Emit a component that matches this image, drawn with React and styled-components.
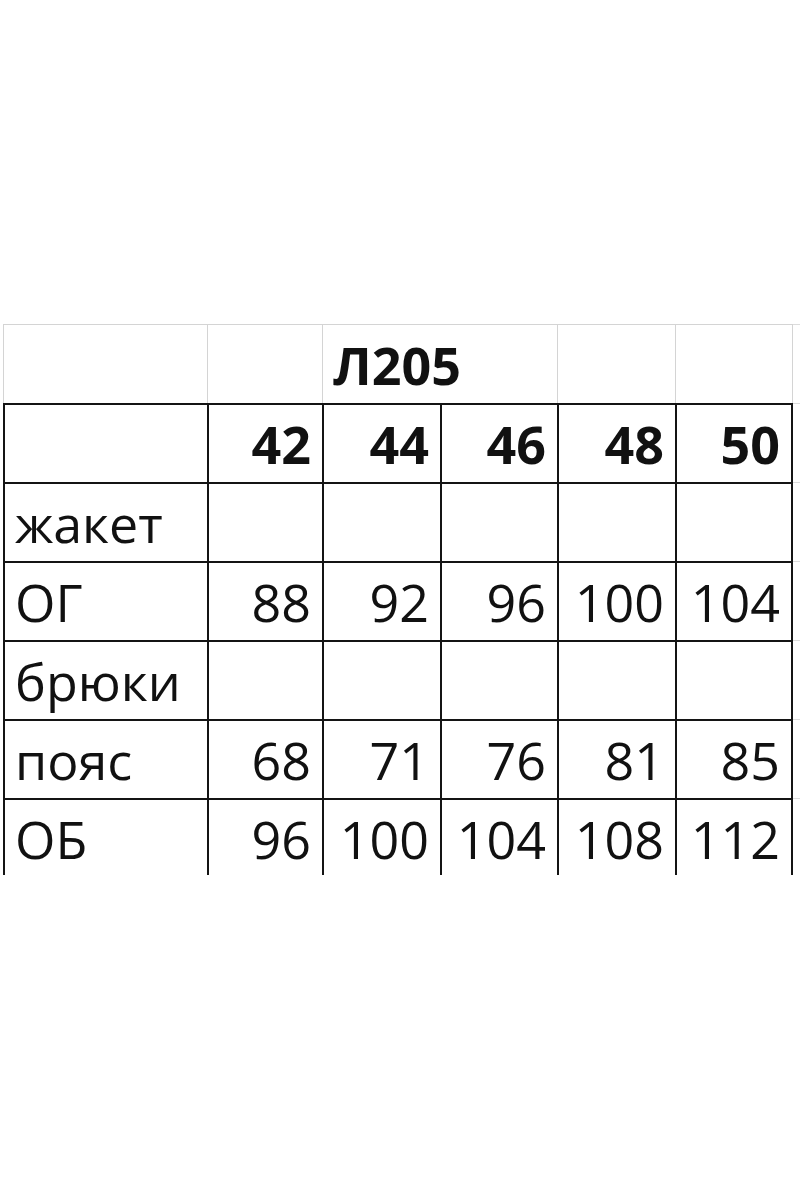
import React from "react";
import styled, { createGlobalStyle } from "styled-components";

const Global = createGlobalStyle`
  html, body { margin: 0; padding: 0; background: #fff; }
  body { font-family: "Open Sans", "Noto Sans", sans-serif; color: #111; }
`;

const Page = styled.div`
  width: 800px;
  height: 1200px;
  padding-top: 324px;
  padding-left: 3px;
  box-sizing: border-box;
  background: #fff;
`;

const Sheet = styled.div`
  display: grid;
  grid-template-columns: 204px 115px 118px 117px 118px 118px 7px;
  grid-auto-rows: 79px;
  width: 797px;
  height: 551px;
  overflow: hidden;
`;

const Cell = styled.div`
  box-sizing: border-box;
  display: flex;
  align-items: flex-end;
  justify-content: ${(p) => (p.$align === "right" ? "flex-end" : "flex-start")};
  padding: 0 11px 12px 10px;
  font-size: 52px;
  line-height: 1;
  font-weight: ${(p) => (p.$bold ? 700 : 400)};
  color: #111;
  white-space: nowrap;
  border-top: 2px solid #141414;
  border-left: 2px solid #141414;
  ${(p) => p.$last && "border-right: 2px solid #141414;"}
  ${(p) => p.$span && `grid-column: span ${p.$span};`}
`;

const TitleCell = styled(Cell)`
  border-top: 1px solid #d4d4d4;
  border-left: 1px solid #d4d4d4;
  ${(p) => p.$last && "border-right: 1px solid #d4d4d4;"}
`;

const Stub = styled.div`
  box-sizing: border-box;
  border-top: 1px solid #dcdcdc;
`;

const sizes = ["42", "44", "46", "48", "50"];
const rows = [
  { label: "жакет", values: ["", "", "", "", ""] },
  { label: "ОГ", values: ["88", "92", "96", "100", "104"] },
  { label: "брюки", values: ["", "", "", "", ""] },
  { label: "пояс", values: ["68", "71", "76", "81", "85"] },
  { label: "ОБ", values: ["96", "100", "104", "108", "112"] },
];

export default function App() {
  return (
    <>
      <Global />
      <Page>
        <Sheet>
          <TitleCell />
          <TitleCell />
          <TitleCell $bold $span={2}>Л205</TitleCell>
          <TitleCell />
          <TitleCell $last />
          <Stub />

          <Cell />
          {sizes.map((s, i) => (
            <Cell key={s} $bold $align="right" $last={i === sizes.length - 1}>
              {s}
            </Cell>
          ))}
          <Stub />

          {rows.map((r) => (
            <React.Fragment key={r.label}>
              <Cell>{r.label}</Cell>
              {r.values.map((v, i) => (
                <Cell key={i} $align="right" $last={i === r.values.length - 1}>
                  {v}
                </Cell>
              ))}
              <Stub />
            </React.Fragment>
          ))}
        </Sheet>
      </Page>
    </>
  );
}
